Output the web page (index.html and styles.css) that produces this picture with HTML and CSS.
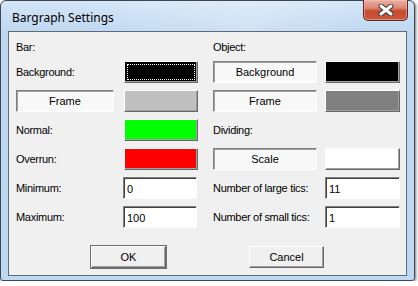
FILE: index.html
```html
<!DOCTYPE html>
<html lang="en">
<head>
<meta charset="UTF-8" />
<title>Bargraph Settings</title>
<link rel="stylesheet" href="styles.css">
</head>
<body>
<div class="window">
  <div class="titlebar">
    <span class="title">Bargraph Settings</span>
    <button class="close" aria-label="Close">
      <svg width="16" height="12" viewBox="0 0 16 12">
        <path d="M3 2 L13 10 M13 2 L3 10" stroke="#3a3a3a" stroke-width="5" stroke-linecap="round"/>
        <path d="M3 2 L13 10 M13 2 L3 10" stroke="#fff" stroke-width="3" stroke-linecap="round"/>
      </svg>
    </button>
  </div>
  <div class="client">
    <div class="panels">
      <div class="panel left">
        <span class="label head wide">Bar:</span>

        <span class="label">Background:</span>
        <span class="swatch focused" style="background:#000"></span>

        <span><button class="pick">Frame</button></span>
        <span class="swatch" style="background:#c0c0c0"></span>

        <span class="label">Normal:</span>
        <span class="swatch" style="background:#00ff00"></span>

        <span class="label">Overrun:</span>
        <span class="swatch" style="background:#ff0000"></span>

        <span class="label">Minimum:</span>
        <input class="field" type="text" value="0" />

        <span class="label">Maximum:</span>
        <input class="field" type="text" value="100" />
      </div>

      <div class="panel right">
        <span class="label head wide">Object:</span>

        <span><button class="pick">Background</button></span>
        <span class="swatch" style="background:#000"></span>

        <span><button class="pick">Frame</button></span>
        <span class="swatch" style="background:#808080"></span>

        <span class="label wide">Dividing:</span>

        <span><button class="pick">Scale</button></span>
        <span class="swatch" style="background:#fff"></span>

        <span class="label">Number of large tics:</span>
        <input class="field" type="text" value="11" />

        <span class="label">Number of small tics:</span>
        <input class="field" type="text" value="1" />
      </div>
    </div>

    <div class="actions">
      <button class="btn default">OK</button>
      <button class="btn">Cancel</button>
    </div>
  </div>
</div>
</body>
</html>
```

FILE: styles.css
```css
body {
  margin: 0;
  background: #ffffff;
  font-family: "Liberation Sans", Arial, sans-serif;
  font-size: 11px;
  color: #000;
}

.window {
  width: 413px;
  height: 279px;
  border: 1px solid #3e4651;
  border-radius: 6px 6px 3px 3px;
  background: linear-gradient(to bottom, #d4e6f8 0, #bfd8f1 30px, #bcd8f3 100%);
  box-shadow: 1px 1px 3px rgba(0, 0, 0, 0.55);
  display: flex;
  flex-direction: column;
}

.titlebar {
  height: 30px;
  display: flex;
  justify-content: space-between;
  align-items: flex-start;
  background: linear-gradient(to right, rgba(255,255,255,0) 20%, rgba(255,255,255,0.25) 60%, rgba(255,255,255,0) 90%);
}

.title {
  font-family: "Noto Sans", "Open Sans", sans-serif;
  font-size: 12px;
  color: #000;
  padding: 8px 0 0 11px;
}

.close {
  width: 45px;
  height: 21px;
  margin: -1px 6px 0 0;
  padding: 0;
  border: 1px solid #5c2a22;
  border-top: none;
  border-radius: 0 0 5px 5px;
  background: linear-gradient(to bottom, #eab0a2 0, #dc8773 40%, #c74a30 55%, #c9573c 100%);
  box-shadow: inset 0 0 0 1px rgba(255, 200, 190, 0.45);
  display: flex;
  align-items: center;
  justify-content: center;
}

.client {
  flex: 1;
  margin: 0 7px 4px 7px;
  border: 1px solid #5e6a78;
  background: #f0f0f0;
}

.panels {
  display: flex;
  gap: 15px;
  padding-left: 7px;
}

.panel {
  display: grid;
  grid-template-rows: repeat(7, 22px);
  row-gap: 7px;
  align-items: center;
}

.left {
  grid-template-columns: 108px 74px;
}

.right {
  grid-template-columns: 112px 75px;
}

.label {
  letter-spacing: -0.3px;
  white-space: nowrap;
}

.wide {
  grid-column: span 2;
}

.head {
  padding-top: 8px;
}

.swatch {
  height: 22px;
  box-sizing: border-box;
  border: 1px solid;
  border-color: #ffffff #696969 #696969 #ffffff;
  box-shadow: inset -1px -1px #a0a0a0;
}

.swatch.focused {
  outline: 1px dotted #ffffff;
  outline-offset: -4px;
}

.pick {
  display: block;
  height: 22px;
  box-sizing: border-box;
  padding: 0;
  font: inherit;
  color: #000;
  border: 1px solid;
  border-color: #808080 #ffffff #ffffff #808080;
  box-shadow: inset 1px 1px #a0a0a0;
  background: repeating-conic-gradient(#ffffff 0 25%, #f3f3f3 0 50%) 0 0 / 2px 2px;
}

.left .pick {
  width: 98px;
}

.right .pick {
  width: 104px;
}

.field {
  height: 22px;
  width: 100%;
  box-sizing: border-box;
  margin: 0;
  padding: 1px 3px 0;
  font: inherit;
  color: #000;
  background: #fff;
  border: 1px solid;
  border-color: #808080 #ffffff #ffffff #808080;
  box-shadow: inset 1px 1px #404040;
  outline: none;
}

.left .field {
  margin-left: -1px;
}

.actions {
  display: flex;
  justify-content: center;
  gap: 83px;
  margin-top: 18px;
}

.btn {
  width: 75px;
  height: 22px;
  box-sizing: border-box;
  padding: 0;
  font: inherit;
  color: #000;
  background: #f0f0f0;
  border: 1px solid;
  border-color: #ffffff #696969 #696969 #ffffff;
  box-shadow: inset -1px -1px #a0a0a0;
}

.btn.default {
  outline: 1px solid #6e6e6e;
  outline-offset: 0;
  border-color: #ffffff #696969 #696969 #ffffff;
}
```
